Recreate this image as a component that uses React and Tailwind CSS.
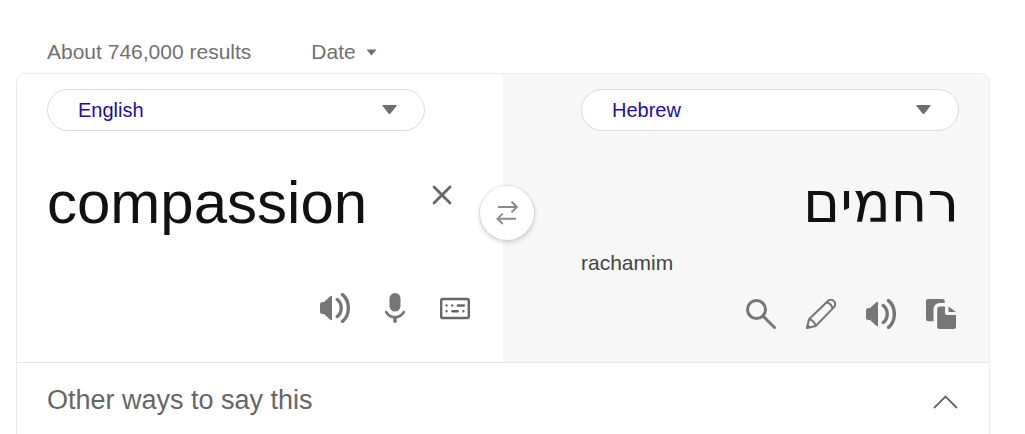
const caret = "pointer-events-none absolute right-[27px] top-[15px]";

function LanguageSelect({ label, value, options }) {
  return (
    <div className="relative">
      <select
        aria-label={label}
        defaultValue={value}
        className="block h-[42px] w-full appearance-none rounded-full border border-[#dcdcdc] bg-white pl-[30px] pr-14 text-[20px] text-[#1a0dab]"
      >
        {options.map((option) => (
          <option key={option}>{option}</option>
        ))}
      </select>
      <svg className={caret} width="16" height="12" viewBox="0 0 16 12" fill="#6f6f6f">
        <path d="M1.500 1h12a.8.8 0 0 1 .6 1.600L8.500 9.500a1.300 1.300 0 0 1-2 0L.9 2.600A.8.8 0 0 1 1.500 1z" />
      </svg>
    </div>
  );
}

function Icon({ children }) {
  return (
    <svg className="block" width="30" height="30" viewBox="0 0 30 30" fill="none" strokeLinecap="round" strokeLinejoin="round">
      {children}
    </svg>
  );
}

function SpeakerIcon() {
  return (
    <Icon>
      <path d="M0 11.500Q0 9 2.500 9H4L10 3.400Q12 2 12 4V26Q12 28 10 26.600L4 21H2.500Q0 21 0 18.500z" fill="#767676" />
      <path d="M17.300 6.500C22.500 10.500 22.500 19.500 17.300 23.500M22.500 1.600C30.300 8 30.300 22 22.500 28.400" stroke="#767676" strokeWidth="3.400" />
    </Icon>
  );
}

function MicIcon() {
  return (
    <Icon>
      <rect x="9.500" y="0" width="11" height="18.600" rx="5.500" fill="#767676" />
      <path d="M6.300 19.300C10.500 26 19.500 26 23.700 19.300" stroke="#767676" strokeWidth="2.800" />
      <path d="M15 24.500V28.200" stroke="#767676" strokeWidth="3.600" />
    </Icon>
  );
}

function KeyboardIcon() {
  return (
    <Icon>
      <rect x="1.200" y="6" width="27.600" height="19" rx="1.500" stroke="#666" strokeWidth="2.400" />
      <path d="M6.600 12.500h.01M12.300 12.500h.01M17.800 12.500h6M6.600 18.300h.01M12.300 18.300h5.500M23.400 18.300h.01" stroke="#666" strokeWidth="2.400" />
    </Icon>
  );
}

function SearchIcon() {
  return (
    <Icon>
      <circle cx="10.500" cy="10.500" r="9" stroke="#767676" strokeWidth="3" />
      <path d="M17.500 17.500L28.500 28.500" stroke="#767676" strokeWidth="3" />
    </Icon>
  );
}

function PencilIcon() {
  return (
    <Icon>
      <path d="M.9 29.100L3 20.300L21.600 2.200C26-1.800 31.800 4 27.800 8.400L9.700 27L.9 29.100zM20.300 3.500C23.500 4 26 6.500 26.500 9.700M3 20.300C6 20.800 9 23.500 9.700 27M1.500 26L4 28.500" stroke="#767676" strokeWidth="2" />
    </Icon>
  );
}

function CopyIcon() {
  return (
    <Icon>
      <path d="M2 0h14.700a2 2 0 0 1 2 2v2h-5.200a6 6 0 0 0-6 6v12.300H2a2 2 0 0 1-2-2V2a2 2 0 0 1 2-2z" fill="#767676" />
      <path d="M13.500 7.500H19V14a2 2 0 0 0 2 2h9v12a2 2 0 0 1-2 2H13.200a2 2 0 0 1-2-2V10a2.400 2.400 0 0 1 2.300-2.500zM22.500 7.500L30 13h-7.500z" fill="#767676" />
    </Icon>
  );
}

export default function App() {
  const sourceActions = [
    { label: "Listen", icon: <SpeakerIcon /> },
    { label: "Voice input", icon: <MicIcon /> },
    { label: "Keyboard", icon: <KeyboardIcon /> },
  ];
  const targetActions = [
    { label: "Search", icon: <SearchIcon /> },
    { label: "Edit", icon: <PencilIcon /> },
    { label: "Listen to translation", icon: <SpeakerIcon /> },
    { label: "Copy", icon: <CopyIcon /> },
  ];

  return (
    <main className="bg-white pl-4 pr-[35px] pt-[38px] font-['Liberation_Sans',Arial,sans-serif]">
      <div className="flex gap-[60px] px-[31px] text-[21px] leading-[28px] text-[#717171]">
        <span>About 746,000 results</span>
        <button type="button" className="flex items-center gap-[10px]">
          Date
          <svg width="11" height="7" viewBox="0 0 11 7" fill="#6f6f6f">
            <path d="M.5.5h10L5.500 6.500z" />
          </svg>
        </button>
      </div>

      <section className="mt-[7px] rounded-t-[9px] border border-b-0 border-[#ececec]">
        <div className="relative grid grid-cols-2">
          {/* Source */}
          <div className="flex h-72 flex-col pb-[39px] pl-[30px] pr-[33px] pt-[15px]">
            <div className="mr-[45px]">
              <LanguageSelect label="Source language" value="English" options={["English", "Hebrew"]} />
            </div>
            <div className="mt-9 flex items-start">
              <textarea
                aria-label="Text to translate"
                rows={1}
                defaultValue="compassion"
                spellCheck={false}
                className="block h-[72px] min-w-0 flex-1 resize-none overflow-hidden text-[60px] leading-[72px] text-[#111] outline-none"
              />
              <button type="button" aria-label="Clear" className="flex h-14 w-14 items-center justify-center">
                <svg width="20" height="20" viewBox="0 0 20 20" stroke="#666" strokeWidth="2.800" strokeLinecap="round">
                  <path d="M2 2L18 18M18 2L2 18" />
                </svg>
              </button>
            </div>
            <div className="mt-auto flex justify-end gap-[30px]">
              {sourceActions.map((action) => (
                <button key={action.label} type="button" aria-label={action.label}>
                  {action.icon}
                </button>
              ))}
            </div>
          </div>

          {/* Target */}
          <div className="flex h-72 flex-col rounded-tr-lg bg-[#f7f7f7] pb-[33px] pl-[78px] pr-[30px] pt-[15px]">
            <LanguageSelect label="Target language" value="Hebrew" options={["Hebrew", "English"]} />
            <p dir="rtl" lang="he" className="mt-9 font-['DejaVu_Sans','Liberation_Sans',sans-serif] text-[56px] leading-[72px] text-[#111]">
              רחמים
            </p>
            <p className="mt-[10px] text-[21px] leading-[28px] text-[#444]">rachamim</p>
            <div className="mt-auto flex justify-end gap-[30px] pr-[3px]">
              {targetActions.map((action) => (
                <button key={action.label} type="button" aria-label={action.label}>
                  {action.icon}
                </button>
              ))}
            </div>
          </div>

          {/* Swap button sits over the seam between both panes */}
          <button
            type="button"
            aria-label="Swap languages"
            className="absolute left-1/2 top-28 -ml-[23px] flex h-[54px] w-[54px] items-center justify-center rounded-full bg-white shadow-[0_0_0_1px_rgba(0,0,0,0.05),0_2px_4px_1px_rgba(0,0,0,0.14)]"
          >
            <svg width="24" height="24" viewBox="0 0 24 24" fill="none" stroke="#8c8c8c" strokeWidth="1.900">
              <path d="M3 6H22M16.500.8L22 6L16.500 11.200M21 17.800H2.500M7.800 12.600L2.500 17.800L7.800 23" />
            </svg>
          </button>
        </div>

        <button type="button" className="flex w-full items-center justify-between border-t border-[#e6e6e6] px-[30px] pb-4 pt-[19px] text-left">
          <span className="text-[27px] leading-[36px] text-[#666]">Other ways to say this</span>
          <svg width="26" height="20" viewBox="0 0 26 20" fill="none" stroke="#666" strokeWidth="1.800">
            <path d="M1 18L12.500 6.500L24 18" />
          </svg>
        </button>
      </section>
    </main>
  );
}
